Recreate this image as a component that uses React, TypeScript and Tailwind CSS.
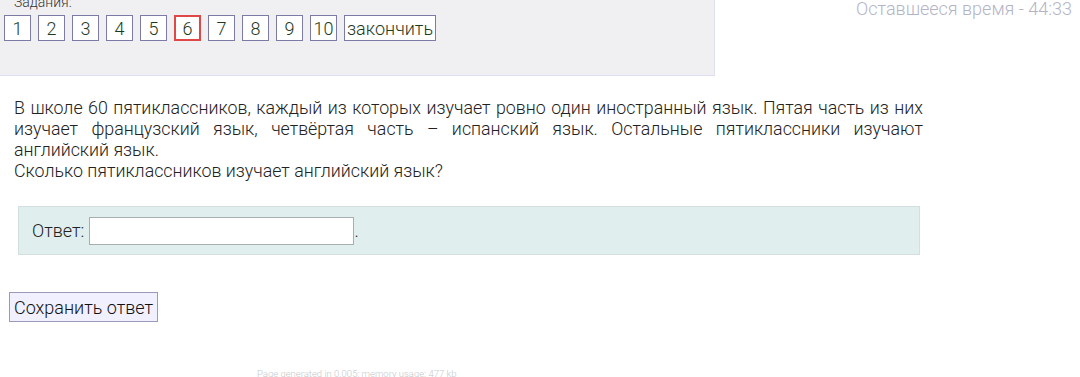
const tasks = [1, 2, 3, 4, 5, 6, 7, 8, 9, 10];

export default function App() {
  return (
    <div
      className="relative w-[1080px] h-[377px] overflow-hidden bg-white text-[#222]"
      style={{ fontFamily: "Roboto, 'Noto Sans', sans-serif" }}
    >
      <div className="absolute right-[8px] top-[-5px] text-[18px] font-light text-[#b4b4c6]">
        Оставшееся время - 44:33
      </div>

      <div className="w-[715px] h-[82px] bg-[#f0f0f2] border-r border-b border-[#dde0ee] mt-[-6px]">
        <div className="pl-[14px] text-[14px] font-light leading-[16px] text-[#333]">
          Задания:
        </div>
        <div className="flex items-center gap-[7px] pl-[4px] mt-[5px]">
          {tasks.map((n) => (
            <div
              key={n}
              className={
                n === 6
                  ? "w-[27px] h-[26px] flex items-center justify-center bg-white border-2 border-[#e04848] text-[18px] font-light text-[#1e3a1e]"
                  : "w-[27px] h-[26px] flex items-center justify-center bg-white border border-[#7c7aa6] text-[18px] font-light text-[#1e3a1e]"
              }
            >
              {n}
            </div>
          ))}
          <div className="h-[26px] px-[2px] flex items-center bg-white border border-[#7c7aa6] text-[18px] font-light text-[#1e3a1e]">
            закончить
          </div>
        </div>
      </div>

      <p className="ml-[14px] w-[909px] mt-[21px] text-[17.8px] font-light leading-[21px] text-justify text-[#222]">
        В школе 60 пятиклассников, каждый из которых изучает ровно один иностранный язык. Пятая часть из них изучает французский язык, четвёртая часть – испанский язык. Остальные пятиклассники изучают английский язык.
        <br />
        Сколько пятиклассников изучает английский язык?
      </p>

      <div className="ml-[18px] mt-[25px] w-[902px] h-[49px] bg-[#e0efee] border border-[#d3dede] flex items-center pl-[13px] text-[18px] font-light">
        <span>Ответ:</span>
        <div className="ml-[5px] w-[265px] h-[28px] bg-white border border-[#a8aeb0]" />
        <span>.</span>
      </div>

      <div className="ml-[9px] mt-[37px] w-fit h-[30px] px-[4px] flex items-center bg-[#f0f0ff] border border-[#9a9ab8] text-[18px] font-light text-[#111]">
        Сохранить ответ
      </div>

      <div className="absolute left-[257px] top-[367px] text-[9.5px] font-light text-[#c8c8c8]">
        Page generated in 0.005; memory usage: 477 kb
      </div>
    </div>
  );
}
